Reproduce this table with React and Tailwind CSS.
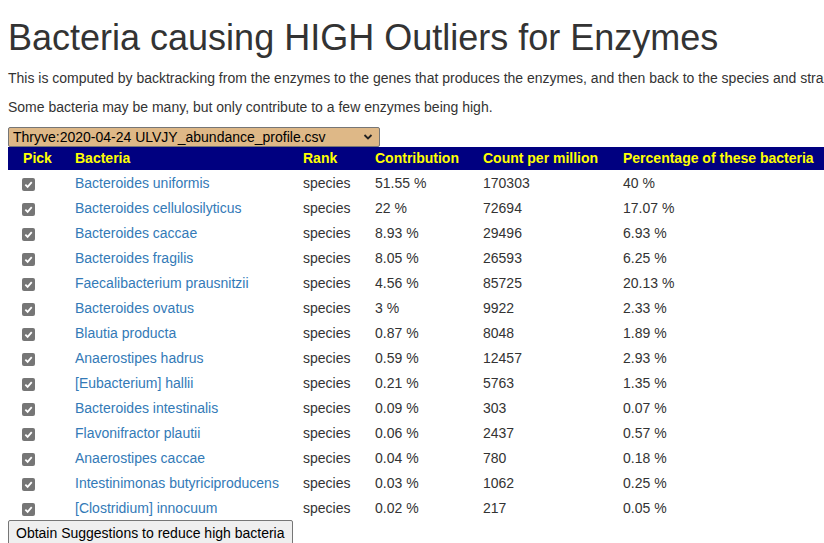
import React from 'react';

const rows = [
  ['Bacteroides uniformis', '51.55 %', '170303', '40 %'],
  ['Bacteroides cellulosilyticus', '22 %', '72694', '17.07 %'],
  ['Bacteroides caccae', '8.93 %', '29496', '6.93 %'],
  ['Bacteroides fragilis', '8.05 %', '26593', '6.25 %'],
  ['Faecalibacterium prausnitzii', '4.56 %', '85725', '20.13 %'],
  ['Bacteroides ovatus', '3 %', '9922', '2.33 %'],
  ['Blautia producta', '0.87 %', '8048', '1.89 %'],
  ['Anaerostipes hadrus', '0.59 %', '12457', '2.93 %'],
  ['[Eubacterium] hallii', '0.21 %', '5763', '1.35 %'],
  ['Bacteroides intestinalis', '0.09 %', '303', '0.07 %'],
  ['Flavonifractor plautii', '0.06 %', '2437', '0.57 %'],
  ['Anaerostipes caccae', '0.04 %', '780', '0.18 %'],
  ['Intestinimonas butyriciproducens', '0.03 %', '1062', '0.25 %'],
  ['[Clostridium] innocuum', '0.02 %', '217', '0.05 %'],
];

// gray checked box, drawn instead of the native input
const Check = () => (
  <span className="inline-flex w-[13px] h-[13px] rounded-[2px] bg-[#767676] items-center justify-center">
    <svg width="9" height="9" viewBox="0 0 10 10">
      <path d="M1.5 5.2 L4 7.6 L8.6 2.4" fill="none" stroke="#fff" strokeWidth="2" />
    </svg>
  </span>
);

export default function App() {
  return (
    <div className="w-[824px] h-[543px] overflow-hidden bg-white text-[#333] font-['Liberation_Sans',Arial,sans-serif] text-[14px]">
      <div className="px-2 w-[900px]">
        <h1 className="text-[36px] leading-[40px] pt-[18px] mb-[10px]">Bacteria causing HIGH Outliers for Enzymes</h1>
        <p className="leading-[20px] whitespace-nowrap mb-[9px]">
          This is computed by backtracking from the enzymes to the genes that produces the enzymes, and then back to the species and strains that produce those genes.
        </p>
        <p className="leading-[20px] whitespace-nowrap mb-[10px]">
          Some bacteria may be many, but only contribute to a few enzymes being high.
        </p>
        <div className="w-[372px] h-[20px] bg-[#deb887] border border-[#767676] rounded-[2px] flex items-center justify-between pl-[4px] pr-[6px] text-[14px] text-black">
          <span>Thryve:2020-04-24 ULVJY_abundance_profile.csv</span>
          <svg width="10" height="8" viewBox="0 0 10 8">
            <path d="M1.5 2 L5 5.5 L8.5 2" fill="none" stroke="#222" strokeWidth="1.8" />
          </svg>
        </div>
        <table className="border-collapse w-[816px]">
          <thead>
            <tr className="bg-[#000080] text-[#ffff00] font-bold h-[23px] text-left">
              <th className="w-[59px] text-center font-bold">Pick</th>
              <th className="w-[228px] px-2 font-bold">Bacteria</th>
              <th className="w-[72px] px-2 font-bold">Rank</th>
              <th className="w-[108px] px-2 font-bold">Contribution</th>
              <th className="w-[140px] px-2 font-bold">Count per million</th>
              <th className="px-2 font-bold">Percentage of these bacteria</th>
            </tr>
          </thead>
          <tbody>
            {rows.map(([name, contrib, count, pct]) => (
              <tr key={name} className="h-[25px]">
                <td className="pl-[14px] pt-[3px]"><Check /></td>
                <td className="px-2 pt-[1px] text-[#337ab7]">{name}</td>
                <td className="px-2 pt-[1px]">species</td>
                <td className="px-2 pt-[1px]">{contrib}</td>
                <td className="px-2 pt-[1px]">{count}</td>
                <td className="px-2 pt-[1px]">{pct}</td>
              </tr>
            ))}
          </tbody>
        </table>
        <button className="h-[26px] px-[7px] bg-[#efefef] border border-[#767676] rounded-[2px] text-black text-[14px] leading-[20px]">
          Obtain Suggestions to reduce high bacteria
        </button>
      </div>
    </div>
  );
}
